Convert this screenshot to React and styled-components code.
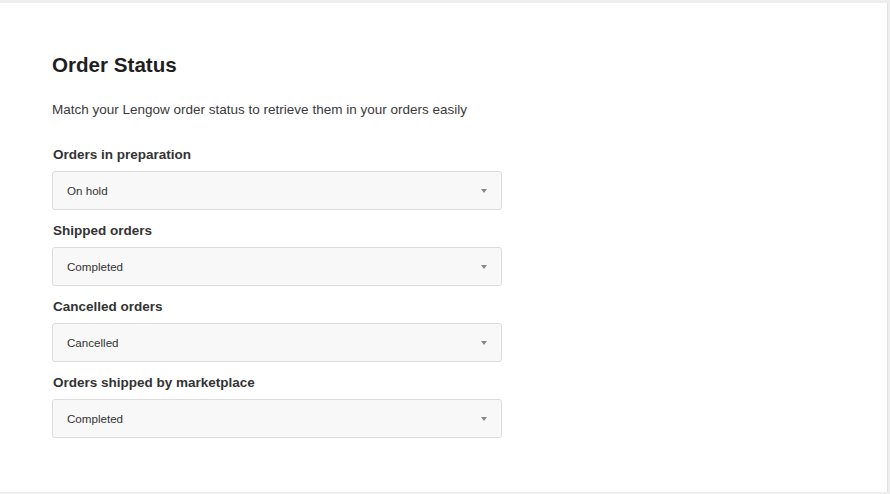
import React from 'react';
import styled, { createGlobalStyle } from 'styled-components';

const GlobalStyle = createGlobalStyle`
  html, body {
    margin: 0;
    padding: 0;
    background: #eeeeee;
    font-family: "Liberation Sans", Arial, sans-serif;
  }
  * { box-sizing: border-box; }
`;

const statuses = [
  { label: 'Orders in preparation', value: 'On hold' },
  { label: 'Shipped orders', value: 'Completed' },
  { label: 'Cancelled orders', value: 'Cancelled' },
  { label: 'Orders shipped by marketplace', value: 'Completed' },
];

function App() {
  return (
    <>
      <GlobalStyle />
      <Page>
        <Panel>
          <Title>Order Status</Title>
          <Description>
            Match your Lengow order status to retrieve them in your orders easily
          </Description>
          {statuses.map((item) => (
            <Field key={item.label}>
              <Label>{item.label}</Label>
              <Select>
                <span>{item.value}</span>
                <Caret />
              </Select>
            </Field>
          ))}
        </Panel>
      </Page>
    </>
  );
}
export default App;

const Page = styled.div`
  width: 890px;
  height: 494px;
  padding-top: 3px;
  padding-bottom: 2px;
  overflow: hidden;
`;

const Panel = styled.div`
  width: 888px;
  height: 489px;
  background: #ffffff;
  border-right: 1px solid #e2e2e2;
  padding: 50px 52px 0;
`;

const Title = styled.h2`
  margin: 0;
  font-size: 20.6px;
  font-weight: bold;
  color: #1f1f1f;
  line-height: 24px;
`;

const Description = styled.p`
  margin: 23px 0 25px;
  font-size: 13.5px;
  color: #3a3a3a;
  line-height: 20px;
`;

const Field = styled.div`
  width: 450px;
  margin-bottom: 11px;
`;

const Label = styled.div`
  font-size: 13.5px;
  font-weight: bold;
  color: #333333;
  line-height: 20px;
  margin-bottom: 6px;
  padding-left: 1px;
`;

const Select = styled.div`
  height: 39px;
  display: flex;
  align-items: center;
  justify-content: space-between;
  padding: 0 14px 0 14px;
  background: #f8f8f8;
  border: 1px solid #dcdcdc;
  border-radius: 3px;
  font-size: 11.6px;
  color: #333333;
`;

const Caret = styled.span`
  width: 0;
  height: 0;
  border-left: 3px solid transparent;
  border-right: 3px solid transparent;
  border-top: 4px solid #888888;
`;
